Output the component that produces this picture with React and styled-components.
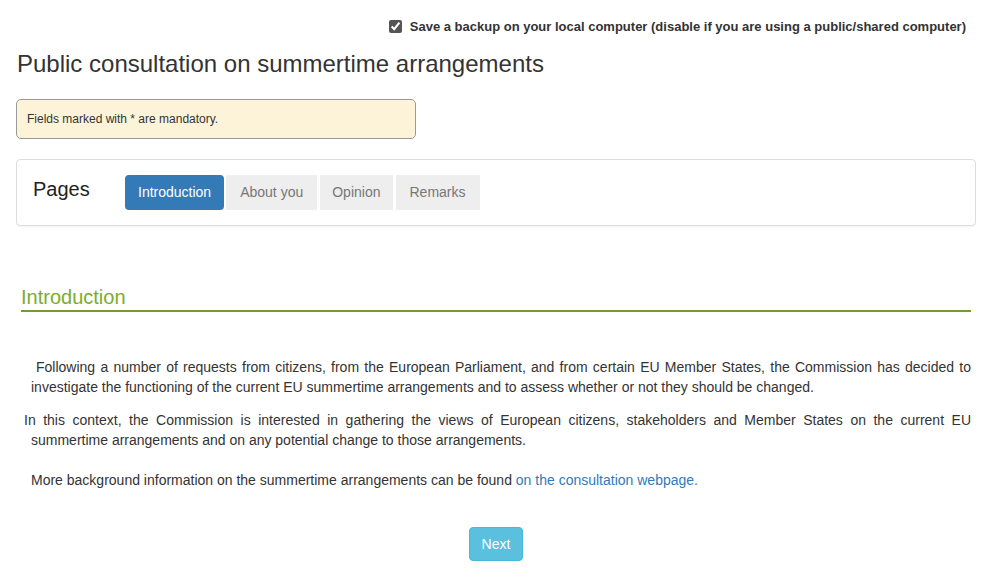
import React from "react";
import styled, { createGlobalStyle } from "styled-components";

const Global = createGlobalStyle`
  html, body { margin: 0; padding: 0; background: #fff; }
  body { font-family: "Liberation Sans", Arial, sans-serif; font-size: 14px; color: #333; }
  * { box-sizing: border-box; }
`;

const Page = styled.div`
  width: 986px;
  padding: 0 10px 0 16px;
`;

const BackupRow = styled.label`
  display: flex;
  justify-content: flex-end;
  align-items: center;
  gap: 8px;
  padding: 17px 10px 0 0;
  height: 36px;
  font-size: 13px;
  font-weight: bold;
  color: #333;
`;

const Check = styled.input`
  margin: 0;
  width: 13px;
  height: 13px;
  accent-color: #555;
`;

const Title = styled.h1`
  margin: 14px 0 0 1px;
  font-size: 24px;
  font-weight: normal;
  line-height: 28px;
  color: #333;
`;

const Alert = styled.div`
  margin-top: 21px;
  width: 400px;
  height: 40px;
  display: flex;
  align-items: center;
  padding: 0 10px;
  background: #fcf3d9;
  border: 1px solid #999;
  border-radius: 5px;
  font-size: 12px;
  color: #333;
`;

const Panel = styled.div`
  margin-top: 20px;
  width: 960px;
  height: 67px;
  border: 1px solid #ddd;
  border-radius: 4px;
  box-shadow: 0 1px 1px rgba(0, 0, 0, 0.05);
  padding: 15px 16px;
  display: flex;
  align-items: flex-start;
`;

const PanelTitle = styled.div`
  font-size: 20px;
  line-height: 28px;
  color: #222;
  width: 92px;
`;

const Tabs = styled.div`
  display: flex;
  gap: 2px;
`;

const Tab = styled.button`
  font-family: inherit;
  font-size: 14px;
  height: 35px;
  padding: 0 ${(p) => p.$pad || 14}px 1px;
  border: none;
  border-radius: ${(p) => (p.$active ? "4px" : "0")};
  background: ${(p) => (p.$active ? "#337ab7" : "#eeeeee")};
  color: ${(p) => (p.$active ? "#fff" : "#777")};
  margin-left: ${(p) => p.$ml || 0}px;
  cursor: pointer;
`;

const Section = styled.div`
  margin: 59px 0 0 5px;
  width: 950px;
`;

const SectionTitle = styled.h2`
  margin: 0;
  font-size: 20px;
  font-weight: normal;
  line-height: 24px;
  color: #7bad2a;
  border-bottom: 2px solid #6e9f2c;
  padding-bottom: 1px;
`;

const Body = styled.div`
  padding: 45px 0 0 10px;
  width: 950px;
`;

const Para = styled.p`
  margin: 0 0 ${(p) => p.$mb}px 0;
  text-align: justify;
  line-height: 20px;
  font-size: 14px;
  color: #333;
  text-indent: ${(p) => p.$indent}px;
`;

const Link = styled.a`
  color: #337ab7;
  text-decoration: none;
`;

const Footer = styled.div`
  display: flex;
  justify-content: center;
  padding: 37px 0 0 0;
`;

const NextButton = styled.button`
  font-family: inherit;
  font-size: 14px;
  height: 34px;
  padding: 0 12px;
  border: 1px solid #46b8da;
  border-radius: 4px;
  background: #5bc0de;
  color: #fff;
`;

export default function App() {
  return (
    <>
      <Global />
      <Page>
        <BackupRow>
          <Check type="checkbox" defaultChecked />
          Save a backup on your local computer (disable if you are using a public/shared computer)
        </BackupRow>
        <Title>Public consultation on summertime arrangements</Title>
        <Alert>Fields marked with * are mandatory.</Alert>
        <Panel>
          <PanelTitle>Pages</PanelTitle>
          <Tabs>
            <Tab $active $pad={13}>Introduction</Tab>
            <Tab $pad={14}>About you</Tab>
            <Tab $pad={12} $ml={1}>Opinion</Tab>
            <Tab $pad={14} $ml={1}>Remarks</Tab>
          </Tabs>
        </Panel>
        <Section>
          <SectionTitle>Introduction</SectionTitle>
          <Body>
            <Para $indent={5} $mb={13}>
              Following a number of requests from citizens, from the European Parliament, and from certain EU Member States, the Commission has decided to investigate the functioning of the current EU summertime arrangements and to assess whether or not they should be changed.
            </Para>
            <Para $indent={-7} $mb={20}>
              In this context, the Commission is interested in gathering the views of European citizens, stakeholders and Member States on the current EU summertime arrangements and on any potential change to those arrangements.
            </Para>
            <Para $indent={0} $mb={0}>
              More background information on the summertime arrangements can be found{" "}
              <Link href="#">on the consultation webpage.</Link>
            </Para>
          </Body>
          <Footer>
            <NextButton>Next</NextButton>
          </Footer>
        </Section>
      </Page>
    </>
  );
}
